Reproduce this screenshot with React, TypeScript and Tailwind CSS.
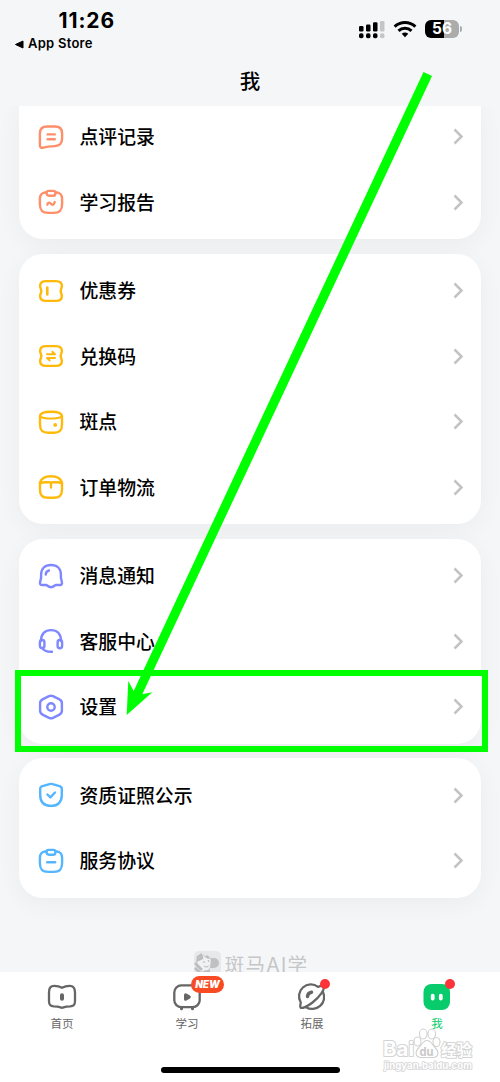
import type { ReactNode } from 'react';

type Item = { label: string; icon: ReactNode };
type Group = { color: string; items: Item[] };

const clipboard = (
  <>
    <path d="M9.5 4.2C5 4.5 2.9 6 2.9 11v5c0 6.500 2.200 8.900 8.200 8.900h5.800c6 0 8.200-2.400 8.200-8.900v-5c0-5-2.100-6.500-6.600-6.800" />
    <path d="M9.600 4.400c0-1.200.8-1.500 2-1.500h4.800c1.200 0 2 .3 2 1.500v1c0 1.700-.8 2.300-2.400 2.300h-4c-1.600 0-2.400-.6-2.400-2.300z" />
  </>
);

const ticket = (
  <path d="M9 4.100h10c3.600 0 5.900 1.600 5.900 4.900 0 1.900-1.200 3-1.200 5.100s1.200 3.200 1.200 5c0 3.200-2.300 4.800-5.900 4.800H9c-3.600 0-5.900-1.600-5.900-4.800 0-1.800 1.200-2.900 1.200-5S3.100 10.900 3.100 9c0-3.300 2.300-4.900 5.900-4.900z" />
);

const groups: Group[] = [
  {
    color: 'text-[#ff8f6b]',
    items: [
      {
        label: '点评记录',
        icon: (
          <>
            <path d="M10 3.500h8c5 0 7.100 2 7.100 7v4.800c0 5.400-2.100 7.500-7.200 7.800-5.200.2-8.200.5-11.600 1.500-2.200.6-3.400-.2-3.400-2.500V10.500c0-5 2.100-7 7.100-7z" />
            <path d="M10.600 11.400h7.200M10.600 16.300h7.200" />
          </>
        ),
      },
      {
        label: '学习报告',
        icon: (
          <>
            {clipboard}
            <path d="M10.300 16.500c.8-2.300 2.300-2.300 3.600-.7s2.700 1.300 3.800-1.700" />
          </>
        ),
      },
    ],
  },
  {
    color: 'text-[#ffb90a]',
    items: [
      {
        label: '优惠券',
        icon: (
          <>
            {ticket}
            <path d="M10.300 10.600v6.800" strokeWidth="2.600" />
          </>
        ),
      },
      {
        label: '兑换码',
        icon: (
          <>
            {ticket}
            <path d="M10 12.200h8L15.300 9.800M18 16h-8l2.700 2.500" strokeWidth="1.900" />
          </>
        ),
      },
      {
        label: '斑点',
        icon: (
          <>
            <path d="M3 8.300C3 4.900 6.500 3.700 14 3.700s11 1.200 11 4.600v8.300c0 6-2.300 8.200-8.300 8.200h-5.400C5.300 24.800 3 22.600 3 16.600z" />
            <path d="M3.200 8.200C5.300 10.100 9.300 10.600 14 10.600s8.700-.5 10.800-2.400" strokeWidth="2" />
            <circle cx="18.200" cy="16.900" r="1" fill="currentColor" strokeWidth="1.800" />
          </>
        ),
      },
      {
        label: '订单物流',
        icon: (
          <>
            <path d="M3 9.500C4.400 5.300 7.500 3.200 14 3.200s9.600 2.100 11 6.300v7.300c0 5.700-2.300 8-8.300 8h-5.400c-6 0-8.300-2.300-8.300-8z" />
            <path d="M3.400 10.200C6 8.700 9 9.400 14 9.400s8-.7 10.600.8M14 9.600v5" />
          </>
        ),
      },
    ],
  },
  {
    color: 'text-[#7f88ff]',
    items: [
      {
        label: '消息通知',
        icon: (
          <>
            <path d="M4.100 12.500C4.100 6.500 8 3 14 3s9.900 3.500 9.900 9.500v3.300l1 4.300c.4 1.800-.3 2.900-2 2.900h-3.900c-1.400 0-1.900 2.200-5 2.200S10.400 23 9 23H5.100c-1.700 0-2.400-1.100-2-2.900l1-4.300z" />
            <path d="M8.800 12.500c0-2.200 1.300-3.600 3.200-4" />
          </>
        ),
      },
      {
        label: '客服中心',
        icon: (
          <>
            <path d="M4 14C4 7 7.800 3.100 14 3.100S24 7 24 14" />
            <rect x="2.900" y="13" width="4.500" height="8.200" rx="2.250" />
            <rect x="20.600" y="13" width="4.500" height="8.200" rx="2.250" />
            <path d="M5 20.800c1.500 3 4.500 4.100 10 4" />
          </>
        ),
      },
      {
        label: '设置',
        icon: (
          <>
            <path d="M12 3.100c1.400-.6 2.600-.6 4 0l6.500 3.300c1.700.9 2.400 2 2.400 3.800v7.600c0 1.800-.7 2.900-2.400 3.800L16 24.900c-1.400.6-2.600.6-4 0l-6.500-3.300c-1.700-.9-2.400-2-2.400-3.800v-7.600c0-1.800.7-2.900 2.400-3.800z" />
            <circle cx="14" cy="14" r="3.700" />
          </>
        ),
      },
    ],
  },
  {
    color: 'text-[#55b5ff]',
    items: [
      {
        label: '资质证照公示',
        icon: (
          <>
            <path d="M12.500 3.100c1.200-.3 1.800-.3 3 0l7 2c1.500.4 2.300 1.200 2.300 2.900v6c0 7-3.800 10.900-10.800 10.900S3.200 21 3.200 14V8c0-1.700.8-2.500 2.300-2.900z" />
            <path d="M10.400 13.500l3 2.900 4.600-4.900" />
          </>
        ),
      },
      {
        label: '服务协议',
        icon: (
          <>
            {clipboard}
            <path d="M10.200 15.300h7.900" />
          </>
        ),
      },
    ],
  },
];

const tabs = [
  {
    label: '首页',
    icon: (
      <>
        <path d="M3 11.500c0-4.600 1.400-6.600 5.300-6.600 3.400 0 4.900.3 7.700 1.900 2.800-1.600 4.300-1.900 7.700-1.900 3.900 0 5.300 2 5.300 6.600v8.500c0 4-1.200 5.200-4.800 5.400-3.200.1-4.800.3-6.700 1-.9.400-2.100.4-3 0-1.900-.7-3.500-.9-6.700-1-3.600-.2-4.800-1.400-4.800-5.400z" />
        <path d="M16 14.300v3.500" strokeWidth="4" />
      </>
    ),
  },
  {
    label: '学习',
    icon: (
      <>
        <rect x="3.300" y="4.400" width="25.400" height="21.800" rx="7" />
        <path d="M10.500 26.500v1.300M21.500 26.500v1.300" strokeWidth="3" />
        <path d="M14.600 13.900l3.600 2.100-3.600 2.100z" fill="currentColor" strokeWidth="3.200" />
      </>
    ),
  },
  {
    label: '拓展',
    icon: (
      <>
        <path d="M4.800 21.500A11.800 11.800 0 0 1 22 5.900c2.800-1.200 4.800-1.200 5.500-.2C29 8.500 23.500 16 16.500 21.500 11 25.800 5.700 28 4.600 26.500c-.6-.8-.4-2.600.2-5z" />
        <path d="M27 11a11.900 11.900 0 0 1-17 15.200" />
        <path d="M11.500 15.400c.3-2.500 1.700-3.800 4-4.200" strokeWidth="3.500" />
      </>
    ),
  },
  {
    label: '我',
    icon: (
      <>
        <rect x="2.500" y="3" width="26.500" height="26" rx="8" fill="currentColor" stroke="none" />
        <path d="M11.700 14.600v3M19.800 14.600v3" stroke="white" strokeWidth="3.800" />
      </>
    ),
  },
];

const StatusBar = () => (
  <div className="flex h-[54px] justify-between">
    <div className="pl-[14px] pt-[10px]">
      <div className="pl-[44.500px] text-[21px] leading-[22px] font-bold tracking-[0.9px]">11:26</div>
      <div className="flex h-[24px] items-center gap-[4px] text-[13px] font-semibold tracking-[0.25px]">
        <svg width="10" height="9" viewBox="0 0 10 9">
          <path d="M1.500 4.500L9 1v7z" fill="black" stroke="black" strokeLinejoin="round" />
        </svg>
        <span>App Store</span>
      </div>
    </div>
    <div className="flex items-start gap-2 pr-[38px] pt-5">
      <svg width="26" height="19" viewBox="0 0 26 19" className="ml-px">
        <g fill="black">
          <rect y="6" width="4.500" height="5.500" rx="1.200" />
          <rect x="7" y="4.500" width="4.500" height="7" rx="1.200" />
          <rect x="14" y="2.300" width="4.500" height="9.200" rx="1.200" />
          <rect y="13.200" width="4.500" height="5" rx="1.800" />
          <rect x="7" y="13.200" width="4.500" height="5" rx="1.800" />
          <rect x="14" y="13.200" width="4.500" height="5" rx="1.800" />
        </g>
        <rect x="21" y="1" width="4.500" height="10.500" rx="1.200" fill="#c4c5c7" />
        <rect x="21" y="13.200" width="4.500" height="5" rx="1.800" fill="#c4c5c7" />
      </svg>
      <svg width="24" height="18" viewBox="0 0 24 18" fill="none" stroke="black" strokeWidth="3">
        <path d="M1.600 6.700C7.500 1.200 16.500 1.200 22.400 6.700" />
        <path d="M5.500 10.900c3.600-3.400 9.400-3.400 13 0" />
        <path d="M8.700 13.800c2-1.700 4.600-1.700 6.600 0L12 17.200z" fill="black" stroke="none" />
      </svg>
      <div className="flex items-center">
        <div className="flex h-[18px] w-[34px] items-center justify-center rounded-[6px] bg-linear-to-r from-black from-56% to-[#abadac] to-56% text-[15.500px] leading-[18px] font-bold text-white">
          56
        </div>
        <div className="ml-px h-[6px] w-[2px] rounded-r-full bg-[#abadac]" />
      </div>
    </div>
  </div>
);

const Row = ({ item, color }: { item: Item; color: string }) => (
  <div className="flex h-[65.500px] items-center pl-[18px] pr-[17px]">
    <svg
      width="28"
      height="28"
      viewBox="0 0 28 28"
      fill="none"
      stroke="currentColor"
      strokeWidth="2.400"
      strokeLinecap="round"
      strokeLinejoin="round"
      className={color}
    >
      {item.icon}
    </svg>
    <span className="ml-[14.500px] flex-1 pt-[3px] text-[18.850px] leading-7 font-medium">{item.label}</span>
    <svg width="11" height="17" viewBox="0 0 11 17" fill="none" stroke="#c3c3c3" strokeWidth="2.500">
      <path d="M1.500 1.500l7 7-7 7" />
    </svg>
  </div>
);

const BrandMark = () => (
  <div className="mt-[53px] flex justify-center gap-[4px] pl-[2px] text-[#c5c6c8]">
    <svg width="27" height="27" viewBox="0 0 27 27">
      <rect width="27" height="27" rx="5" fill="#e7e8e9" />
      <path d="M3 8l4-1 2-3 3 2.500 4 .5 1.500 2v6l-4 5-7 1-4-6z" fill="#f0f1f2" stroke="#c8c9cb" />
      <path d="M4 6l3-2 1 3-4 2zM1 12l7 7M1 17l6 6M10 21l6-1M12 5l3 2" fill="none" stroke="#bcbdbf" strokeWidth="2.500" />
      <path d="M17 7h3a5 5 0 0 1 0 10h-4z" fill="#c0c1c3" />
      <circle cx="10" cy="11" r=".8" fill="#aaa" />
      <circle cx="14.500" cy="10" r=".8" fill="#aaa" />
      <path d="M10 15c2 1.500 4 1 5-.5" fill="none" stroke="#b5b6b8" />
    </svg>
    <span className="text-[19.500px] leading-7 tracking-[1.300px] whitespace-nowrap">斑马AI学</span>
  </div>
);

const BaiduMark = () => (
  <svg className="absolute left-[380px] top-[1025px]" width="96" height="50" viewBox="0 0 96 50">
    <g fill="white" stroke="#d4d4d4" strokeWidth="2" paintOrder="stroke" strokeLinejoin="round" fontWeight="bold">
      <text x="3" y="31" fontSize="20" textLength="31" lengthAdjust="spacingAndGlyphs">Bai</text>
      <text x="61" y="30.500" fontSize="16" textLength="31" lengthAdjust="spacingAndGlyphs">经验</text>
      <text x="4" y="43.500" fontSize="9.500" strokeWidth="1.600" textLength="88" lengthAdjust="spacingAndGlyphs">
        jingyan.baidu.com
      </text>
    </g>
    <g fill="#fff" stroke="#d0d0d0" strokeWidth="1.100">
      <ellipse cx="37.500" cy="16.500" rx="3.500" ry="4.500" />
      <ellipse cx="43.300" cy="9" rx="3.800" ry="5" />
      <ellipse cx="51.800" cy="9" rx="3.800" ry="5" />
      <ellipse cx="56.500" cy="17" rx="3.500" ry="4.500" />
      <path d="M47 15.500c4 0 5 4 8 7 5 5 3 10-2 10H41c-5 0-7-5-2-10 3-3 4-7 8-7z" />
    </g>
    <text x="39.500" y="30.500" fontSize="12" fontWeight="bold" fill="#c8c8c8" textLength="14" lengthAdjust="spacingAndGlyphs">
      du
    </text>
  </svg>
);

const App = () => {
  return (
    <div className="relative flex h-[1082px] w-[500px] flex-col overflow-hidden bg-[#f5f6f8] font-[Inter,'Noto_Sans_CJK_SC',sans-serif] text-black">
      <header className="h-[106px] shrink-0">
        <StatusBar />
        <h1 className="pt-[13.500px] text-center text-[20.500px] leading-7 font-medium">我</h1>
      </header>

      <main className="min-h-0 flex-1 overflow-hidden px-[19px]">
        <div className="-mt-[6.500px] flex flex-col gap-[14.500px]">
          {groups.map((group, index) => (
            <section
              key={index}
              className={`bg-white py-[4.250px] shadow-[0_6px_26px_rgba(0,0,0,0.045)] ${
                index === 0 ? 'rounded-b-[24px]' : 'rounded-[24px]'
              }`}
            >
              {group.items.map((item) => (
                <Row key={item.label} item={item} color={group.color} />
              ))}
            </section>
          ))}
        </div>
        <BrandMark />
      </main>

      <nav className="h-[110px] shrink-0 bg-white">
        <div className="grid grid-cols-4">
          {tabs.map((tab, index) => (
            <div
              key={tab.label}
              className={`flex flex-col items-center pt-[9px] pr-px ${index === 3 ? 'text-[#08cc6b]' : 'text-[#666]'}`}
            >
              <div className="relative">
                <svg
                  width="32"
                  height="32"
                  viewBox="0 0 32 32"
                  fill="none"
                  stroke="currentColor"
                  strokeWidth="2.300"
                  strokeLinecap="round"
                  strokeLinejoin="round"
                >
                  {tab.icon}
                </svg>
                {index === 1 && (
                  <span className="absolute -top-[5px] left-[20px] flex h-[17px] w-[33px] items-center justify-center rounded-full bg-[#f84a23] text-[10px] font-black text-white italic">
                    NEW
                  </span>
                )}
                {index > 1 && <span className="absolute -top-[2px] left-[24px] size-[9.500px] rounded-full bg-[#fc3439]" />}
              </div>
              <span className="pt-px text-[11.500px] leading-5">{tab.label}</span>
            </div>
          ))}
        </div>
        <div className="mx-auto mt-[32.500px] h-[6px] w-[179px] rounded-full bg-black" />
      </nav>

      <BaiduMark />

      {/* pointer to the settings row */}
      <div className="absolute left-[15px] top-[670px] h-[82px] w-[473px] border-[6px] border-[#00ff00]" />
      <svg className="absolute left-0 top-0" width="500" height="1082" viewBox="0 0 500 1082">
        <path d="M423.500 72l8.500 4L142.300 694.300l10 -2L126.700 715l1.600-34 5.400 10z" fill="#00ff00" />
      </svg>
    </div>
  );
};

export default App;
